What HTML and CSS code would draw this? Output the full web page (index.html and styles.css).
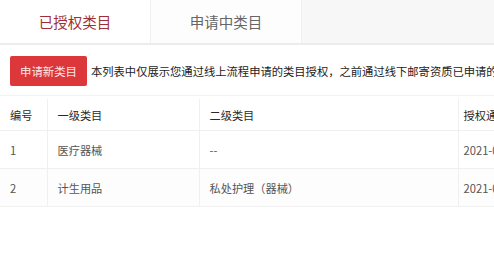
FILE: index.html
```html
<!DOCTYPE html>
<html lang="zh-CN">
<head>
<meta charset="UTF-8">
<meta name="viewport" content="width=device-width, initial-scale=1.0">
<title>类目授权</title>
<link rel="stylesheet" href="styles.css">
</head>
<body>
<div class="page">
    <div class="tabs">
        <div class="tab active">已授权类目</div>
        <div class="tab">申请中类目</div>
    </div>

    <div class="toolbar">
        <button class="btn-apply">申请新类目</button>
        <span class="notice">本列表中仅展示您通过线上流程申请的类目授权，之前通过线下邮寄资质已申请的类目请联系客服查询</span>
    </div>

    <table class="cat-table">
        <colgroup>
            <col class="col-no">
            <col class="col-first">
            <col class="col-second">
            <col class="col-date">
        </colgroup>
        <thead>
            <tr>
                <th>编号</th>
                <th>一级类目</th>
                <th>二级类目</th>
                <th class="date">授权通过时间</th>
            </tr>
        </thead>
        <tbody>
            <tr>
                <td>1</td>
                <td>医疗器械</td>
                <td>--</td>
                <td class="date">2021-03-12</td>
            </tr>
            <tr>
                <td>2</td>
                <td>计生用品</td>
                <td>私处护理（器械）</td>
                <td class="date">2021-03-12</td>
            </tr>
        </tbody>
    </table>
</div>
</body>
</html>
```

FILE: styles.css
```css
body {
    margin: 0;
    font-family: "Noto Sans CJK SC", "Noto Sans", sans-serif;
    background-color: #fff;
    overflow: hidden;
}

.page {
    width: 494px;
    overflow: hidden;
}

.tabs {
    display: flex;
    height: 43px;
    background-color: #f7f7f7;
    border-bottom: 2px solid #ececec;
}

.tab {
    width: 150px;
    display: flex;
    align-items: center;
    justify-content: center;
    background-color: #fdfdfd;
    border-right: 1px solid #f0f0f0;
    font-size: 14.5px;
    color: #666;
}

.tab.active {
    background-color: #fff;
    color: #9e2f37;
}

.toolbar {
    display: flex;
    align-items: center;
    gap: 4px;
    padding: 11px 0 9px 10px;
    border-bottom: 1px solid #f2f2f2;
    white-space: nowrap;
}

.btn-apply {
    flex-shrink: 0;
    height: 30px;
    padding: 0 10px;
    border: none;
    border-radius: 2px;
    background-color: #dc373b;
    color: #fbe9e9;
    font-family: inherit;
    font-size: 11.4px;
}

.notice {
    font-size: 11.3px;
    color: #222;
}

.cat-table {
    width: 620px;
    margin-top: 3px;
    border-collapse: collapse;
    table-layout: fixed;
    font-size: 11.2px;
}

.col-no { width: 47px; }
.col-first { width: 152px; }
.col-second { width: 259px; }
.col-date { width: 162px; }

.cat-table th,
.cat-table td {
    text-align: left;
    padding: 0 10px;
    border: 1px solid #f0f0f0;
    border-left: none;
    white-space: nowrap;
}

.cat-table .date {
    padding-left: 5px;
}

.cat-table th {
    height: 31px;
    font-weight: normal;
    color: #2a2a2a;
    background-color: #fff;
    border-top: none;
}

.cat-table td {
    height: 37px;
    color: #555;
}

.cat-table tbody tr:nth-child(2) td {
    background-color: #fdfdfd;
}
```
